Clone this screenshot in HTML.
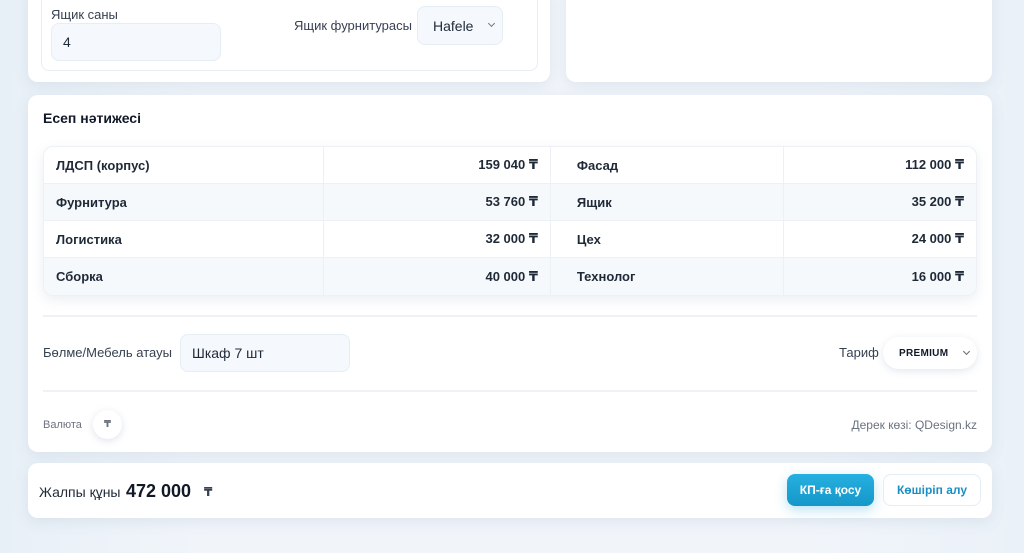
<!DOCTYPE html>
<html><head><meta charset="utf-8"><style>
*{box-sizing:border-box;margin:0;padding:0}
body{width:1024px;height:553px;overflow:hidden;background:linear-gradient(90deg,#e8f0f7 0%,#f1f5fa 20%,#f1f5fa 80%,#eaf1f8 100%);font-family:"Liberation Sans","DejaVu Sans",sans-serif;color:#1f2937;position:relative}
.card{position:absolute;background:#fff;border-radius:10px;box-shadow:0 4px 14px rgba(90,120,160,.12)}
.abs{position:absolute}
.t{position:absolute;white-space:nowrap}
.table{position:absolute;left:43px;top:146px;width:934px;height:150px;border:1px solid #edf1f5;border-radius:10px;overflow:hidden;box-shadow:0 4px 12px rgba(90,120,160,.12)}
.row{height:37px;display:flex;font-size:13px;font-weight:bold;color:#1f2937;border-bottom:1px solid #edf1f5}
.row:last-child{border-bottom:none}
.row.alt{background:#f6f9fc}
.c{display:flex;align-items:center;border-right:1px solid #edf1f5;padding:0 12px}
.c1{width:281px}.c2{width:227px;justify-content:flex-end}.c3{width:234px;padding-left:26px}.c4{width:192px;justify-content:flex-end;border-right:none}
.inp{position:absolute;background:#f5f9fd;border:1px solid #e5edf5;border-radius:8px;font-size:14px;color:#1f2937;display:flex;align-items:center;padding-left:11px}
.chev{position:absolute;width:6px;height:6px;border-right:1.3px solid #555;border-bottom:1.3px solid #555;transform:rotate(45deg)}
</style></head><body>
<div class="card" style="left:28px;top:-20px;width:522px;height:102px"></div>
<div class="abs" style="left:41px;top:-10px;width:497px;height:81px;border:1px solid #e8eef4;border-radius:8px"></div>
<div class="t" style="left:51px;top:7px;font-size:13px;color:#374151">Ящик саны</div>
<div class="inp" style="left:51px;top:23px;width:170px;height:38px">4</div>
<div class="t" style="left:294px;top:18px;font-size:13px;color:#374151">Ящик фурнитурасы</div>
<div class="inp" style="left:417px;top:6px;width:86px;height:39px;padding-left:15px">Hafele</div>
<div class="chev" style="left:489px;top:21px;width:5px;height:5px;border-color:#777"></div>
<div class="card" style="left:566px;top:-20px;width:426px;height:102px"></div>

<div class="card" style="left:28px;top:95px;width:964px;height:357px"></div>
<div class="t" style="left:43px;top:110px;font-size:14px;font-weight:bold;color:#111827">Есеп нәтижесі</div>
<div class="table">
<div class="row"><div class="c c1">ЛДСП (корпус)</div><div class="c c2">159 040 ₸</div><div class="c c3">Фасад</div><div class="c c4">112 000 ₸</div></div>
<div class="row alt"><div class="c c1">Фурнитура</div><div class="c c2">53 760 ₸</div><div class="c c3">Ящик</div><div class="c c4">35 200 ₸</div></div>
<div class="row"><div class="c c1">Логистика</div><div class="c c2">32 000 ₸</div><div class="c c3">Цех</div><div class="c c4">24 000 ₸</div></div>
<div class="row alt"><div class="c c1">Сборка</div><div class="c c2">40 000 ₸</div><div class="c c3">Технолог</div><div class="c c4">16 000 ₸</div></div>
</div>
<div class="abs" style="left:43px;top:315px;width:934px;height:2px;background:#eef2f6"></div>
<div class="t" style="left:43px;top:345px;font-size:13px;color:#374151">Бөлме/Мебель атауы</div>
<div class="inp" style="left:180px;top:334px;width:170px;height:38px">Шкаф 7 шт</div>
<div class="t" style="left:839px;top:345px;font-size:13px;color:#374151">Тариф</div>
<div class="abs" style="left:883px;top:337px;width:94px;height:32px;border-radius:16px;background:#fff;box-shadow:0 2px 8px rgba(90,120,160,.18)"></div>
<div class="t" style="left:899px;top:348px;font-size:10px;font-weight:bold;color:#111827;letter-spacing:.3px">PREMIUM</div>
<div class="chev" style="left:964px;top:349px;width:5px;height:5px;border-color:#666"></div>
<div class="abs" style="left:43px;top:390px;width:934px;height:2px;background:#eef2f6"></div>
<div class="t" style="left:43px;top:419px;font-size:11px;color:#6b7280">Валюта</div>
<div class="abs" style="left:93px;top:410px;width:29px;height:29px;border-radius:50%;background:#fff;box-shadow:0 2px 8px rgba(90,120,160,.2);font-size:10px;color:#6b7280;text-align:center;line-height:29px;font-weight:bold">₸</div>
<div class="t" style="right:47px;top:418px;font-size:12px;color:#6b7280">Дерек көзі: QDesign.kz</div>

<div class="card" style="left:28px;top:463px;width:964px;height:55px"></div>
<div class="t" style="left:39px;top:484px;font-size:14px;color:#1f2937">Жалпы құны</div>
<div class="t" style="left:126px;top:481px;font-size:18px;font-weight:bold;color:#111827">472 000</div>
<div class="t" style="left:204px;top:485px;font-size:12px;font-weight:bold;color:#374151">₸</div>
<div class="abs" style="left:787px;top:474px;width:87px;height:32px;border-radius:8px;background:linear-gradient(#25b0e0,#1597c9);box-shadow:0 4px 12px rgba(30,160,215,.3);color:#fff;font-size:12px;font-weight:bold;text-align:center;line-height:32px">КП-ға қосу</div>
<div class="abs" style="left:883px;top:474px;width:98px;height:32px;border-radius:8px;background:#fff;border:1px solid #e5edf5;color:#1a8fc4;font-size:12px;font-weight:bold;text-align:center;line-height:30px">Көшіріп алу</div>
</body></html>
